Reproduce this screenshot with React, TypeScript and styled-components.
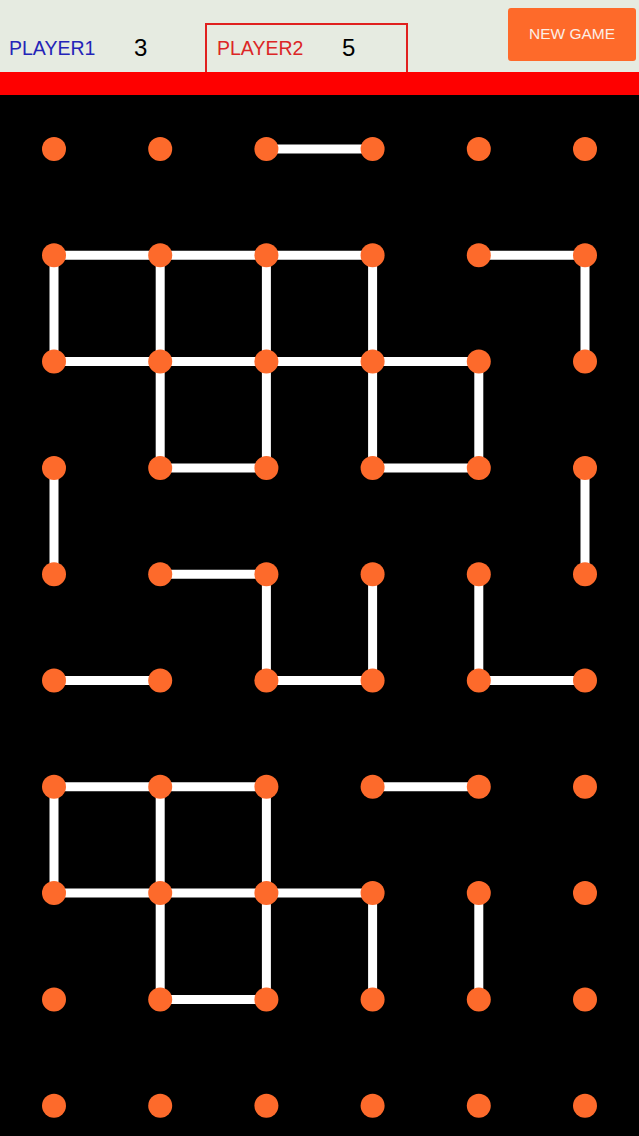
import React from 'react';
import styled, { createGlobalStyle } from 'styled-components';

const GlobalStyle = createGlobalStyle`
  html, body {
    margin: 0;
    padding: 0;
    background: #000;
  }
  body {
    font-family: "Liberation Sans", Arial, sans-serif;
  }
`;

const Screen = styled.div`
  width: 639px;
  height: 1136px;
  display: flex;
  flex-direction: column;
  background: #000;
  overflow: hidden;
`;

const Header = styled.div`
  height: 72px;
  background: #e6ebe1;
  display: flex;
  align-items: flex-end;
`;

const PlayerPanel = styled.div<{ $active: boolean; $width: number }>`
  box-sizing: border-box;
  width: ${(p) => p.$width}px;
  height: 49px;
  border: 2px solid ${(p) => (p.$active ? '#e0201e' : 'transparent')};
  border-bottom: none;
  display: flex;
  align-items: center;
  padding-left: ${(p) => (p.$active ? 10 : 7)}px;
  padding-bottom: 1px;
`;

const PlayerName = styled.span<{ $color: string }>`
  width: 125px;
  font-size: 19.5px;
  color: ${(p) => p.$color};
`;

const Score = styled.span`
  font-size: 24px;
  color: #000;
`;

const NewGame = styled.button`
  margin-left: auto;
  margin-right: 3px;
  align-self: flex-start;
  margin-top: 8px;
  width: 128px;
  height: 53px;
  border: none;
  border-radius: 3px;
  background: #fe6a2a;
  color: #fbeee6;
  font-family: "Liberation Sans", Arial, sans-serif;
  font-size: 15.5px;
  padding: 0 0 2px;
`;

const RedBar = styled.div`
  height: 23px;
  background: #fe0000;
`;

const Board = styled.svg`
  display: block;
  flex: 1;
`;

const COLS = 6;
const ROWS = 10;
const X0 = 54;
const DX = 106.2;
const Y0 = 149 - 95;
const DY = 106.3;

// horizontal edges: [row, col] joins col and col+1
const hEdges: [number, number][] = [
  [0, 2],
  [1, 0], [1, 1], [1, 2], [1, 4],
  [2, 0], [2, 1], [2, 2], [2, 3],
  [3, 1], [3, 3],
  [4, 1],
  [5, 0], [5, 2], [5, 4],
  [6, 0], [6, 1], [6, 3],
  [7, 0], [7, 1], [7, 2],
  [8, 1],
];

// vertical edges: [row, col] joins row and row+1
const vEdges: [number, number][] = [
  [1, 0], [1, 1], [1, 2], [1, 3], [1, 5],
  [2, 1], [2, 2], [2, 3], [2, 4],
  [3, 0], [3, 5],
  [4, 2], [4, 3], [4, 4],
  [6, 0], [6, 1], [6, 2],
  [7, 1], [7, 2], [7, 3], [7, 4],
];

const px = (c: number) => X0 + c * DX;
const py = (r: number) => Y0 + r * DY;

const App = () => {
  const dots = [];
  for (let r = 0; r < ROWS; r++) {
    for (let c = 0; c < COLS; c++) {
      dots.push(<circle key={`d${r}-${c}`} cx={px(c)} cy={py(r)} r={12} fill="#fd6a2b" />);
    }
  }

  return (
    <Screen>
      <GlobalStyle />
      <Header>
        <PlayerPanel $active={false} $width={205}>
          <PlayerName $color="#2424b8">PLAYER1</PlayerName>
          <Score>3</Score>
        </PlayerPanel>
        <PlayerPanel $active={true} $width={203}>
          <PlayerName $color="#dc2626">PLAYER2</PlayerName>
          <Score>5</Score>
        </PlayerPanel>
        <NewGame>NEW GAME</NewGame>
      </Header>
      <RedBar />
      <Board viewBox="0 0 639 1041" width={639} height={1041}>
        {hEdges.map(([r, c]) => (
          <line
            key={`h${r}-${c}`}
            x1={px(c)}
            y1={py(r)}
            x2={px(c + 1)}
            y2={py(r)}
            stroke="#fff"
            strokeWidth={9}
          />
        ))}
        {vEdges.map(([r, c]) => (
          <line
            key={`v${r}-${c}`}
            x1={px(c)}
            y1={py(r)}
            x2={px(c)}
            y2={py(r + 1)}
            stroke="#fff"
            strokeWidth={9}
          />
        ))}
        {dots}
      </Board>
    </Screen>
  );
};

export default App;
